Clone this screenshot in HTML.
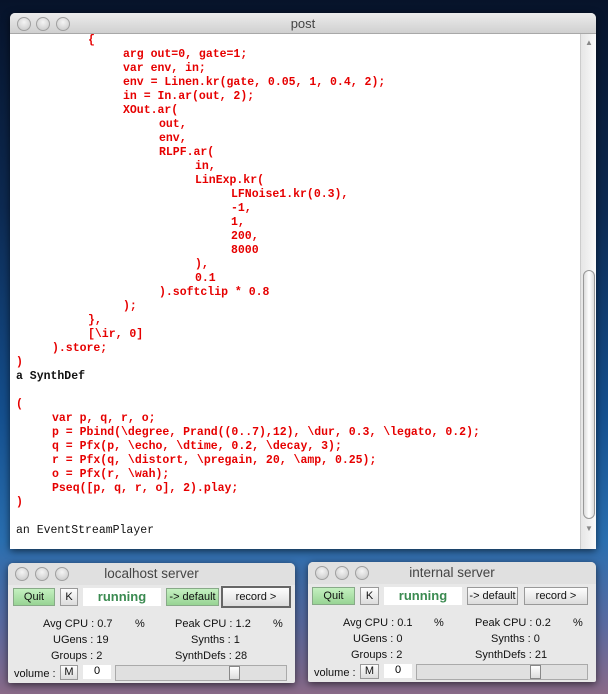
<!DOCTYPE html>
<html><head><meta charset="utf-8"><style>
*{margin:0;padding:0;box-sizing:border-box}
body{width:608px;height:694px;overflow:hidden;position:relative;font-family:"Liberation Sans",sans-serif;
background:linear-gradient(180deg,#07132a 0%,#0d2a52 30%,#15508f 60%,#2a6fb0 78%,#5a6aa0 90%,#8a6a88 100%);}
.win{position:absolute;background:#e8e8e8;border-radius:5px 5px 2px 2px;box-shadow:0 2px 8px rgba(0,0,0,.6)}
.tb{position:absolute;left:0;right:0;top:0;height:21px;border-radius:5px 5px 0 0;background:linear-gradient(#ececec,#d0d0d0);border-bottom:1px solid #a8a8a8;text-align:center;font-size:13px;color:#444;line-height:21px}
.dot{position:absolute;top:4px;width:14px;height:14px;border-radius:50%;background:radial-gradient(circle at 50% 35%,#f4f4f4,#c4c4c4);border:1px solid #a0a0a0}
.txt{position:absolute;left:0;top:21px;width:570px;bottom:0;background:#fff}
.l{position:absolute;font-family:"Liberation Mono",monospace;font-weight:bold;font-size:11.5px;color:#e60000;white-space:pre;line-height:14px}
.k{color:#111}
.sb{position:absolute;left:570px;top:21px;width:16px;bottom:0;background:linear-gradient(90deg,#e6e6e6,#fafafa);border-left:1px solid #ccc}
.thumb{position:absolute;left:2px;width:12px;top:236px;height:249px;border-radius:6px;border:1px solid #999;background:linear-gradient(90deg,#ddd,#fff,#ddd)}
.s{position:absolute;font-size:11px;color:#111;white-space:nowrap;line-height:13px}
.btn{position:absolute;height:18px;font-size:11px;text-align:center;line-height:17px;border:1px solid #999;background:linear-gradient(#fdfdfd,#dcdcdc);color:#111}
.g{background:linear-gradient(#c4f0c0,#98d494);border-color:#8a8}
.run{position:absolute;height:18px;background:#fff;color:#3a8a50;font-weight:bold;font-size:13px;text-align:center;line-height:18px}
.box{position:absolute;height:14px;background:#fff;font-size:11px;text-align:center;line-height:13px}
.sl{position:absolute;height:16px;border:1px solid #aaa;background:#e0e0e0}
.kn{position:absolute;top:0;width:11px;height:14px;border:1px solid #888;background:linear-gradient(#fff,#ddd)}
</style></head><body>
<div class="win" style="left:10px;top:13px;width:586px;height:536px">
<div class="tb">post<div class="dot" style="left:7px"></div><div class="dot" style="left:26px"></div><div class="dot" style="left:46px"></div></div>
<div class="txt">
<div class="l" style="left:78px;top:0">{</div>
<div class="l" style="left:113px;top:14px">arg out=0, gate=1;</div>
<div class="l" style="left:113px;top:28px">var env, in;</div>
<div class="l" style="left:113px;top:42px">env = Linen.kr(gate, 0.05, 1, 0.4, 2);</div>
<div class="l" style="left:113px;top:56px">in = In.ar(out, 2);</div>
<div class="l" style="left:113px;top:70px">XOut.ar(</div>
<div class="l" style="left:149px;top:84px">out,</div>
<div class="l" style="left:149px;top:98px">env,</div>
<div class="l" style="left:149px;top:112px">RLPF.ar(</div>
<div class="l" style="left:185px;top:126px">in,</div>
<div class="l" style="left:185px;top:140px">LinExp.kr(</div>
<div class="l" style="left:221px;top:154px">LFNoise1.kr(0.3),</div>
<div class="l" style="left:221px;top:168px">-1,</div>
<div class="l" style="left:221px;top:182px">1,</div>
<div class="l" style="left:221px;top:196px">200,</div>
<div class="l" style="left:221px;top:210px">8000</div>
<div class="l" style="left:185px;top:224px">),</div>
<div class="l" style="left:185px;top:238px">0.1</div>
<div class="l" style="left:149px;top:252px">).softclip * 0.8</div>
<div class="l" style="left:113px;top:266px">);</div>
<div class="l" style="left:78px;top:280px">},</div>
<div class="l" style="left:78px;top:294px">[\ir, 0]</div>
<div class="l" style="left:42px;top:308px">).store;</div>
<div class="l" style="left:6px;top:322px">)</div>
<div class="l k" style="left:6px;top:336px">a SynthDef</div>
<div class="l" style="left:6px;top:364px">(</div>
<div class="l" style="left:42px;top:378px">var p, q, r, o;</div>
<div class="l" style="left:42px;top:392px">p = Pbind(\degree, Prand((0..7),12), \dur, 0.3, \legato, 0.2);</div>
<div class="l" style="left:42px;top:406px">q = Pfx(p, \echo, \dtime, 0.2, \decay, 3);</div>
<div class="l" style="left:42px;top:420px">r = Pfx(q, \distort, \pregain, 20, \amp, 0.25);</div>
<div class="l" style="left:42px;top:434px">o = Pfx(r, \wah);</div>
<div class="l" style="left:42px;top:448px">Pseq([p, q, r, o], 2).play;</div>
<div class="l" style="left:6px;top:462px">)</div>
<div class="l k" style="left:6px;top:490px;font-weight:normal">an EventStreamPlayer</div>
</div>
<div class="sb"><div style="position:absolute;top:4px;left:4px;font-size:8px;color:#888">▲</div><div class="thumb"></div><div style="position:absolute;top:490px;left:4px;font-size:8px;color:#888">▼</div></div>
</div>

<div class="win" style="left:8px;top:563px;width:287px;height:120px">
<div class="tb" style="height:22px;line-height:22px;border-bottom:none;background:#e0e0e0;font-size:13.5px">localhost server<div class="dot" style="left:7px"></div><div class="dot" style="left:27px"></div><div class="dot" style="left:47px"></div></div>
<div class="btn g" style="left:5px;top:25px;width:42px">Quit</div>
<div class="btn" style="left:52px;top:25px;width:18px">K</div>
<div class="run" style="left:75px;top:25px;width:78px">running</div>
<div class="btn g" style="left:158px;top:25px;width:53px">-&gt; default</div>
<div class="btn" style="left:213px;top:23px;width:70px;height:22px;border:2px solid #666;line-height:18px">record &gt;</div>
<div class="s" style="left:35px;top:55px">Avg CPU : 0.7</div><div class="s" style="left:127px;top:55px">%</div>
<div class="s" style="left:167px;top:55px">Peak CPU : 1.2</div><div class="s" style="left:265px;top:55px">%</div>
<div class="s" style="left:45px;top:71px">UGens : 19</div><div class="s" style="left:183px;top:71px">Synths : 1</div>
<div class="s" style="left:43px;top:87px">Groups : 2</div><div class="s" style="left:167px;top:87px">SynthDefs : 28</div>
<div class="s" style="left:6px;top:105px">volume :</div>
<div class="btn" style="left:52px;top:102px;width:18px;height:15px;line-height:13px">M</div>
<div class="box" style="left:75px;top:102px;width:28px">0</div>
<div class="sl" style="left:107px;top:102px;width:172px"><div class="kn" style="left:113px"></div></div>
</div>

<div class="win" style="left:308px;top:562px;width:288px;height:120px">
<div class="tb" style="height:22px;line-height:22px;border-bottom:none;background:#e0e0e0;font-size:13.5px">internal server<div class="dot" style="left:7px"></div><div class="dot" style="left:27px"></div><div class="dot" style="left:47px"></div></div>
<div class="btn g" style="left:4px;top:25px;width:43px">Quit</div>
<div class="btn" style="left:52px;top:25px;width:19px">K</div>
<div class="run" style="left:76px;top:25px;width:78px">running</div>
<div class="btn" style="left:159px;top:25px;width:51px">-&gt; default</div>
<div class="btn" style="left:216px;top:25px;width:64px">record &gt;</div>
<div class="s" style="left:35px;top:55px">Avg CPU : 0.1</div><div class="s" style="left:126px;top:55px">%</div>
<div class="s" style="left:167px;top:55px">Peak CPU : 0.2</div><div class="s" style="left:265px;top:55px">%</div>
<div class="s" style="left:45px;top:71px">UGens : 0</div><div class="s" style="left:183px;top:71px">Synths : 0</div>
<div class="s" style="left:43px;top:87px">Groups : 2</div><div class="s" style="left:167px;top:87px">SynthDefs : 21</div>
<div class="s" style="left:6px;top:105px">volume :</div>
<div class="btn" style="left:52px;top:102px;width:19px;height:15px;line-height:13px">M</div>
<div class="box" style="left:76px;top:102px;width:28px">0</div>
<div class="sl" style="left:108px;top:102px;width:172px"><div class="kn" style="left:113px"></div></div>
</div>
</body></html>
